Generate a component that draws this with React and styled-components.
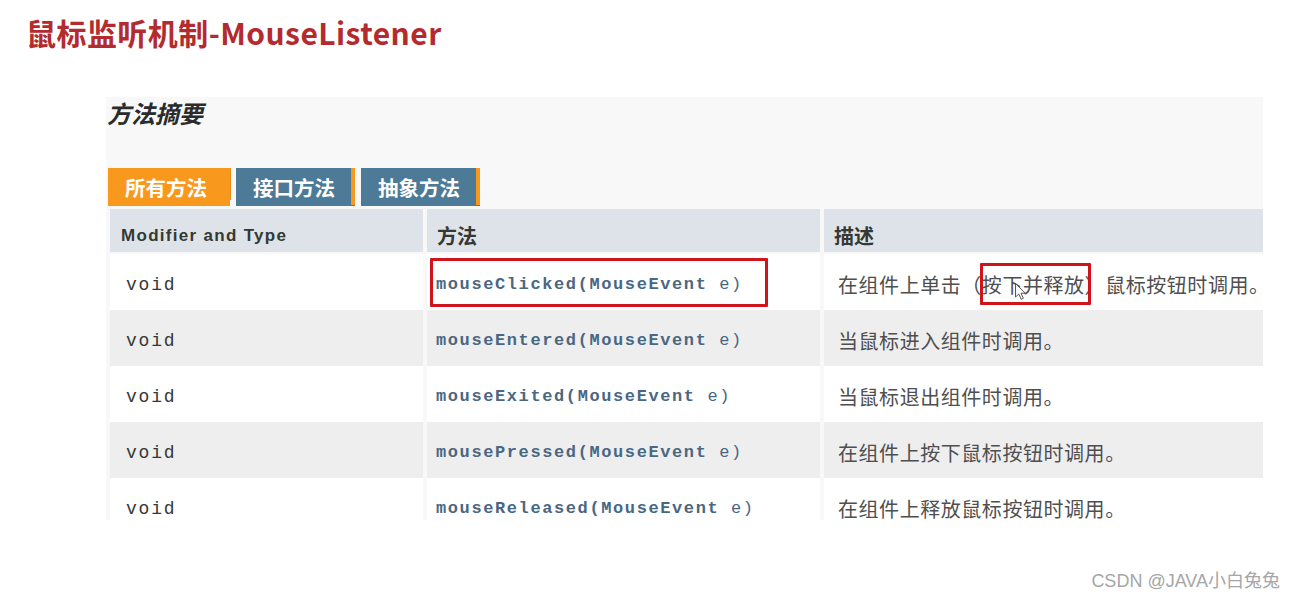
import React from "react";
import styled, { createGlobalStyle } from "styled-components";

const GlobalStyle = createGlobalStyle`
  html, body {
    margin: 0;
    padding: 0;
    background: #ffffff;
  }
  body {
    font-family: "Noto Sans CJK SC", "Noto Sans", sans-serif;
  }
`;

const Page = styled.div`
  position: relative;
  width: 1297px;
  height: 602px;
  overflow: hidden;
  background: #ffffff;
`;

const Title = styled.h1`
  margin: 0;
  padding: 14px 0 0 26px;
  font-size: 30px;
  line-height: 36px;
  font-weight: 700;
  letter-spacing: 0.45px;
  color: #b32b2e;
`;

const Panel = styled.section`
  width: 1157px;
  margin: 47px 0 0 106px;
  padding-top: 1px;
  background: #f8f8f8;
`;

const Heading = styled.h3`
  margin: 0 0 0 1px;
  font-size: 24px;
  line-height: 30px;
  font-weight: 700;
  font-style: italic;
  color: #2b2b2b;
`;

const TabBar = styled.div`
  display: flex;
  gap: 6px;
  margin: 40px 0 0 2px;
  height: 38px;
`;

const Tab = styled.div`
  position: relative;
  display: flex;
  align-items: center;
  padding: 0 ${(p) => (p.$active ? "23px" : "20px")} 0 17px;
  height: 38px;
  font-size: 20.5px;
  font-weight: 700;
  color: #ffffff;
  background: ${(p) => (p.$active ? "#f8981d" : "#4d7a97")};

  &::after {
    content: "";
    position: absolute;
    top: 0;
    right: 0;
    width: 4px;
    height: ${(p) => (p.$active ? "32px" : "37px")};
    background: #f8981d;
    box-shadow: ${(p) => (p.$active ? "1px 0 0 #e88a14" : "none")};
  }
`;

const Table = styled.div`
  display: flex;
  flex-direction: column;
  height: 311px;
  margin: 3px 0 0 4px;
  overflow: hidden;
`;

const Row = styled.div`
  display: grid;
  grid-template-columns: 313px 393px 1fr;
  column-gap: 4px;
  flex: none;
  height: ${(p) => (p.$head ? "43px" : "56px")};
  margin-bottom: ${(p) => (p.$head ? "2px" : "0")};
`;

const Cell = styled.div`
  display: flex;
  align-items: center;
  padding: ${(p) => (p.$head ? "10px 0 0 10px" : `5px 0 0 ${p.$pad || 14}px`)};
  background: ${(p) =>
    p.$head ? "#dee3e9" : p.$alt ? "#eeeeef" : "#ffffff"};
  white-space: nowrap;
  overflow: hidden;
`;

const HeadLabel = styled.span`
  font-size: 20px;
  font-weight: 700;
  color: #353833;
  ${(p) =>
    p.$latin &&
    `font-family: "Liberation Sans", Arial, sans-serif; font-size: 17px; letter-spacing: 1.3px; padding-left: 1px;`}
`;

const Void = styled.span`
  font-family: "Liberation Mono", "Courier New", monospace;
  font-size: 18px;
  letter-spacing: 1.8px;
  color: #353833;
`;

const Code = styled.span`
  position: relative;
  font-family: "Liberation Mono", "Courier New", monospace;
  font-size: 17px;
  letter-spacing: 1.6px;
  color: #4a6782;

  b {
    font-weight: 700;
  }

  ${(p) =>
    p.$marked &&
    `
    &::after {
      content: "";
      position: absolute;
      top: -17px;
      bottom: -13px;
      left: -6px;
      right: -25px;
      border: 3px solid #d0141c;
      border-radius: 1px;
    }
  `}
`;

const Desc = styled.span`
  font-size: 20px;
  letter-spacing: 0.55px;
  color: #4f4f4f;
`;

const Mark = styled.span`
  position: relative;

  &::after {
    content: "";
    position: absolute;
    top: -7px;
    bottom: -6px;
    left: -2px;
    right: -6px;
    border: 3px solid #d0141c;
    border-radius: 1px;
  }
`;

const Pointer = styled.svg`
  position: absolute;
  left: 33px;
  top: 13px;
  width: 11px;
  height: 17px;
  z-index: 2;
`;

const Watermark = styled.div`
  position: absolute;
  right: 17px;
  top: 570px;
  font-family: "Liberation Sans", "Noto Sans CJK SC", sans-serif;
  font-size: 18px;
  line-height: 22px;
  color: #a6a6a6;
`;

const methods = [
  { name: "mouseClicked", desc: null, marked: true },
  { name: "mouseEntered", desc: "当鼠标进入组件时调用。" },
  { name: "mouseExited", desc: "当鼠标退出组件时调用。" },
  { name: "mousePressed", desc: "在组件上按下鼠标按钮时调用。" },
  { name: "mouseReleased", desc: "在组件上释放鼠标按钮时调用。" },
];

// first description has the highlighted part and the mouse pointer over it
const ClickedDesc = () => (
  <Desc>
    在组件上单击（
    <Mark>
      按下并释放
      <Pointer viewBox="0 0 11 17">
        <path
          d="M0.5 0.5 L0.5 14 L3.8 11 L6.2 16.3 L8.3 15.3 L6 10.2 L10.3 10.2 Z"
          fill="#ffffff"
          stroke="#555555"
          strokeWidth="1"
          strokeLinejoin="round"
        />
      </Pointer>
    </Mark>
    ）鼠标按钮时调用。
  </Desc>
);

const App = () => {
  return (
    <Page>
      <GlobalStyle />
      <Title>鼠标监听机制-MouseListener</Title>
      <Panel>
        <Heading>方法摘要</Heading>
        <TabBar>
          <Tab $active>所有方法</Tab>
          <Tab>接口方法</Tab>
          <Tab>抽象方法</Tab>
        </TabBar>
        <Table>
          <Row $head>
            <Cell $head>
              <HeadLabel $latin>Modifier and Type</HeadLabel>
            </Cell>
            <Cell $head>
              <HeadLabel>方法</HeadLabel>
            </Cell>
            <Cell $head>
              <HeadLabel>描述</HeadLabel>
            </Cell>
          </Row>
          {methods.map((m, i) => (
            <Row key={m.name}>
              <Cell $alt={i % 2 === 1} $pad={16}>
                <Void>void</Void>
              </Cell>
              <Cell $alt={i % 2 === 1} $pad={9}>
                <Code $marked={m.marked}>
                  <b>{m.name}(MouseEvent</b> e)
                </Code>
              </Cell>
              <Cell $alt={i % 2 === 1} $pad={14}>
                {m.desc ? <Desc>{m.desc}</Desc> : <ClickedDesc />}
              </Cell>
            </Row>
          ))}
        </Table>
      </Panel>
      <Watermark>CSDN @JAVA小白兔兔</Watermark>
    </Page>
  );
};

export default App;
